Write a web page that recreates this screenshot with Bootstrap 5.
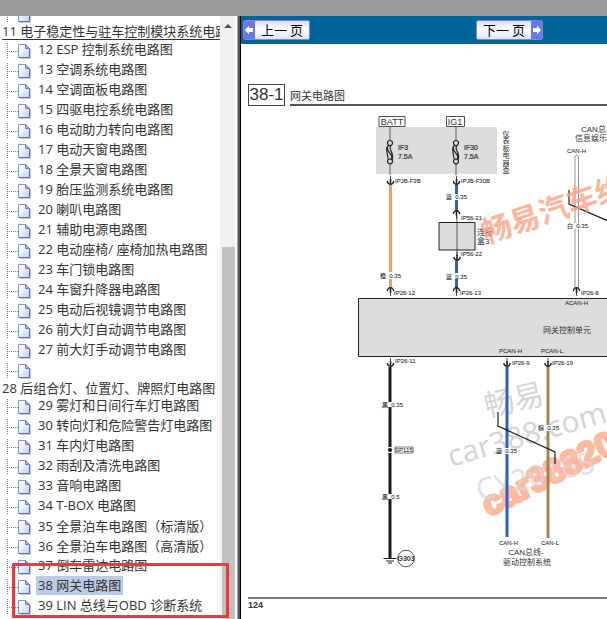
<!DOCTYPE html>
<html lang="zh-CN">
<head>
<meta charset="utf-8">
<meta name="viewport" content="width=device-width, initial-scale=1">
<title>网关电路图</title>
<link href="https://cdn.jsdelivr.net/npm/bootstrap@5.3.0/dist/css/bootstrap.min.css" rel="stylesheet">
<style>
body{font-family:"Open Sans","Noto Sans CJK SC",sans-serif;font-size:13px;color:#333;background:#fff}
.top-strip{height:16px;background:#999}
.tree-pane{width:220px}
.tree{margin-top:-12px}
.tree a{color:#333;text-decoration:none;white-space:nowrap}
.tree-head{height:16px;line-height:16px;padding-left:2px}
.tree a.tree-open{display:block;height:16px;line-height:15px;border-bottom:1px solid #333}
.tree-row{height:20px;line-height:20px;padding-left:7px}
.guide{width:11px;height:20px;flex:none;
 background:repeating-linear-gradient(#888 0 1px,#fff 1px 2px) 0 3px/1px 16px no-repeat,
 repeating-linear-gradient(90deg,#888 0 1px,#fff 1px 2px) 0 11px/11px 1px no-repeat}
.page-icon{width:14px;height:16px;flex:none;margin-top:3px}
.tree-text{margin-left:4px;padding:0 2px;height:19px;line-height:19px}
.tree-text.picked{background:#bccbe8}
.parens{font-family:"Noto Sans CJK TC",sans-serif}
.red-frame{position:absolute;left:12px;top:-13px;width:217px;height:55px;border:3px solid #fb3333;z-index:3;pointer-events:none}
.scroll-bar{width:17px;background:#f0f0f0;border-right:2px solid #fafafa}
.scroll-up{width:8px;height:4px;background:#505050;clip-path:polygon(50% 0,100% 100%,0 100%);margin:8px 4px 0}
.scroll-thumb{width:13px;margin:219px 0 0 2px;background:#c1c1c1}
.splitter{width:4px;background:#555;border-left:1px solid #aaa;border-right:1px solid #000}
.page-bar{height:28px;background:#069;padding:4px 2px}
.page-btn{height:20px;width:67px;padding:0;border:1px solid #8a80d8;border-radius:2px;background:linear-gradient(#d5dcff,#fff 45%,#dfe4ff);color:#000;font-family:"Noto Sans CJK SC",sans-serif;font-size:13px;line-height:17px}
.page-btn svg{width:11px;height:18px;flex:none}
.next-btn{margin-left:166px}
.sheet{padding:40px 0 0 7px}
.sheet-no{border:1px solid #444;height:22px;width:37px;font:17px/19px "Liberation Sans",sans-serif}
.sheet-name{font:11px/17px "Liberation Sans","Noto Sans CJK SC",sans-serif;border-bottom:2px solid #555;margin-left:5px;height:22px;padding-top:4px}
.sheet-foot{height:22px;margin-left:7px;border-top:2px solid #777;font:bold 9px/12px "Liberation Sans",sans-serif}
.wiring{min-height:0;font-family:"Liberation Sans","Noto Sans CJK SC",sans-serif;fill:#333}
.t6{font-size:6px}.t7{font-size:7px}.t8{font-size:8px}.t9{font-size:9px}
.ln{fill:none;stroke:#222}
.wm{font-family:"Noto Sans","Noto Sans CJK SC",sans-serif;font-size:30px;fill:#d6d6d6}
</style>
<script src="https://cdn.jsdelivr.net/npm/bootstrap@5.3.0/dist/js/bootstrap.bundle.min.js"></script>
</head>
<body class="vh-100 overflow-hidden d-flex flex-column">
<svg width="0" height="0" class="position-absolute" aria-hidden="true"><defs>
<linearGradient id="pg" x2="1" y2="1"><stop offset="0" stop-color="#fff"/><stop offset=".4" stop-color="#eef3ff"/><stop offset="1" stop-color="#b4d2fc"/></linearGradient>
<symbol id="page" viewBox="0 0 14 16"><path d="M2 15.500H12.500V6" fill="none" stroke="#ccc"/><path d="M.5 1.500H7.500L11.500 5.500V14.500H.5Z" fill="url(#pg)" stroke="#8794c8"/><path d="M7.500 1.500V5.500H11.500Z" fill="#a3b0e4" stroke="#6f7cb8"/><path d="M.5 14.500H11.500V6" fill="none" stroke="#5f6eaa"/></symbol>
</defs></svg>
<header class="top-strip flex-shrink-0"></header>
<div class="d-flex flex-grow-1 overflow-hidden">
<nav class="tree-pane flex-shrink-0" aria-label="目录">
<div class="tree" id="tree"></div>
</nav>
<div class="scroll-bar flex-shrink-0 d-flex flex-column" aria-hidden="true"><div class="scroll-up"></div><div class="scroll-thumb flex-grow-1"></div></div>
<div class="splitter flex-shrink-0"></div>
<main class="flex-grow-1 d-flex flex-column overflow-hidden">
<div class="page-bar d-flex flex-shrink-0">
<button type="button" class="page-btn d-flex flex-shrink-0"><svg viewBox="0 0 11 18" aria-hidden="true"><path d="M0 0H11V18H0Z" fill="#6878e4"/><path d="M1 9L5 4.500V7H9V11H5V13.500Z" fill="#fff"/></svg><span class="flex-grow-1">上一 页</span></button>
<button type="button" class="page-btn next-btn d-flex flex-shrink-0"><span class="flex-grow-1">下一 页</span><svg viewBox="0 0 11 18" aria-hidden="true"><path d="M0 0H11V18H0Z" fill="#6878e4"/><path d="M10 9L6 4.500V7H2V11H6V13.500Z" fill="#fff"/></svg></button>
</div>
<div class="sheet d-flex flex-shrink-0"><div class="sheet-no text-center">38-1</div><h1 class="sheet-name flex-grow-1 mb-0">网关电路图</h1></div>
<svg class="wiring w-100 flex-grow-1" viewBox="241 106 366 491" preserveAspectRatio="xMinYMin slice" role="img" aria-label="网关电路图">
<defs>
<g id="fork" class="ln"><path d="M0-7V-3" stroke-width=".8"/><path d="M0-4V1" stroke-width="1.600"/><path d="M-3.300-2Q-2.500 1.300 0 1.300T3.300-2" stroke-width="1.300"/></g>
<g id="fuse" class="ln" stroke-width="1.200"><path d="M0-25V-11.500M0 11.500V23" stroke-width=".7"/><circle cy="-9" r="2.500"/><circle cy="9.300" r="2.500"/><path d="M-1.500-7C-6-1 3 1 2 7M-2 6.500C-3-1-5-5-1-6.500M1-6.500C-3-3 5 0 2 8"/></g>
</defs>
<!-- background stamps -->
<text class="wm" transform="translate(487 417) rotate(-13)">畅易</text>
<text class="wm" transform="translate(451 467) rotate(-16)">car388.com</text>
<text transform="translate(489 517) rotate(-27)" font-size="34" font-weight="bold" fill="#ffb9a0" stroke="#ffb9a0" stroke-width="3" stroke-linejoin="round">car38820</text>
<text class="wm" transform="translate(479 501) rotate(-14)" opacity=".7">CY20165</text>
<!-- fuse box -->
<path d="M376 127H497V174H376Z" fill="#ddd"/>
<path class="ln" d="M379 116.500H405V126.500H379ZM446.500 116.500H464.500V126.500H446.500Z" stroke-width=".8"/>
<g class="t9" text-anchor="middle"><text x="392" y="125">BATT</text><text x="455" y="125">IG1</text></g>
<use href="#fuse" x="390" y="152"/><use href="#fuse" x="456" y="152"/>
<g class="t7" stroke="#333" stroke-width=".2"><text x="398" y="150">IF3</text><text x="398" y="159">7.5A</text><text x="464" y="150">IF30</text><text x="464" y="159">7.5A</text></g>
<g class="t7" text-anchor="middle"><text x="506" y="136">仪</text><text x="506" y="143">表</text><text x="506" y="151">板</text><text x="506" y="158">电</text><text x="506" y="166">器</text><text x="506" y="173">盒</text></g>
<!-- joint box and control unit -->
<path d="M439 222.500H475V250H439Z" fill="#ddd" stroke="#222"/>
<path class="ln" d="M457 216V256" stroke-width=".7"/>
<path d="M358.500 298.500H620V356.500H358.500Z" fill="#ddd" stroke="#222"/>
<!-- wires -->
<g fill="none" stroke-width="3">
<path d="M390.500 185V288" stroke="#f9a05f"/>
<path d="M456.500 185V211M456.500 261V288M507 367V537" stroke="#2d62b8"/>
<path d="M548 367V538" stroke="#a5854f"/>
<path d="M390 367V558" stroke="#1c1c1c"/>
<path d="M575 288V157Q576.500 153 578.500 157V288" stroke="#777" stroke-width=".8"/>
</g>
<use href="#fork" x="390.500" y="183"/><use href="#fork" x="456.500" y="183"/><use href="#fork" x="457" y="259"/>
<use href="#fork" x="390.500" y="365"/><use href="#fork" x="507" y="365"/><use href="#fork" x="548" y="365"/>
<g transform="scale(1 -1)"><use href="#fork" x="456.500" y="-212"/><use href="#fork" x="390.500" y="-289"/><use href="#fork" x="456.500" y="-289"/><use href="#fork" x="576.500" y="-289"/></g>
<path class="ln" d="M569 190V204L615 224M498 412V426L555 452V464" stroke-width="1.200"/>
<!-- gaps behind the wire ratings -->
<path d="M387 272H394V279H387ZM453 194H460V200H453ZM453 273H460V279H453ZM573 223H582V229H573ZM386 402H394V407H386ZM386 494H394V499H386ZM503 448H511V454H503ZM544 425H552V431H544Z" fill="#fff"/>
<g class="t6" stroke="#333" stroke-width=".1">
<text x="395" y="183">IPJB-F3B</text><text x="461" y="183">IPJB-F30B</text><text x="461" y="220">IP56-21</text><text x="461" y="256">IP56-22</text>
<text x="394" y="295">IP26-12</text><text x="460" y="295">IP26-13</text><text x="581" y="295">IP26-8</text><text x="565" y="305">ACAN-H</text>
<text x="567" y="153">CAN-H</text><text x="499" y="353">PCAN-H</text><text x="541" y="353">PCAN-L</text>
<text x="395" y="363">IP26-11</text><text x="512" y="365">IP26-9</text><text x="552" y="365">IP26-19</text>
<text x="380" y="278">橙&#160; 0.35</text><text x="446" y="199">蓝&#160; 0.35</text><text x="446" y="279">蓝&#160; 0.35</text><text x="567" y="228">白&#160; 0.35</text>
<text x="382" y="407">黑&#160; 0.35</text><text x="382" y="499">黑&#160; 0.5</text><text x="496" y="453">蓝&#160; 0.35</text><text x="538" y="430">棕&#160; 0.35</text>
<text x="499" y="545">CAN-H</text><text x="541" y="545">CAN-L</text><text x="395" y="452">SP115</text>
</g>
<path class="ln" d="M395 447H413V453H395Z" stroke-width=".6"/>
<circle cx="390" cy="450" r="3" fill="#fff"/><circle cx="390" cy="450" r="2" fill="#111"/>
<path class="ln" d="M383.500 558.500H396.500M386 561H394M388 563H392" stroke-width="1.200"/>
<circle class="ln" cx="406" cy="558.500" r="8.300" stroke-width=".8"/>
<text class="t7" x="406" y="561" text-anchor="middle" font-weight="bold">G303</text>
<g class="t8"><text x="581" y="132">CAN总线-</text><text x="575" y="141">信息娱乐系统</text><text x="477" y="235">连接</text><text x="477" y="244">盒3</text>
<text x="567" y="333" text-anchor="middle">网关控制单元</text><text x="526" y="555" text-anchor="middle">CAN总线-</text><text x="527" y="565" text-anchor="middle">驱动控制系统</text></g>
<text transform="translate(486 244) rotate(-19)" font-size="30" font-weight="bold" fill="#ff9c80" opacity=".75">畅易汽车维</text>
</svg>
<footer class="sheet-foot flex-shrink-0">124</footer>
</main>
</div>
<script>
const rows = ["", "#11 电子稳定性与驻车控制模块系统电路", "12 ESP 控制系统电路图", "13 空调系统电路图", "14 空调面板电路图", "15 四驱电控系统电路图", "16 电动助力转向电路图", "17 电动天窗电路图", "18 全景天窗电路图", "19 胎压监测系统电路图", "20 喇叭电路图", "21 辅助电源电路图", "22 电动座椅/ 座椅加热电路图", "23 车门锁电路图", "24 车窗升降器电路图", "25 电动后视镜调节电路图", "26 前大灯自动调节电路图", "27 前大灯手动调节电路图", "", "#28 后组合灯、位置灯、牌照灯电路图", "29 雾灯和日间行车灯电路图", "30 转向灯和危险警告灯电路图", "31 车内灯电路图", "32 雨刮及清洗电路图", "33 音响电路图", "34 T-BOX 电路图", "35 全景泊车电路图（标清版）", "36 全景泊车电路图（高清版）", "37 倒车雷达电路图", "38 网关电路图", "39 LIN 总线与OBD 诊断系统", ""];
const label = t => t.replace(/[（）]/g, '<span class="parens" lang="zh-TW">$&</span>');
document.getElementById("tree").innerHTML = rows.map(r => {
  if (r[0] === "#") return `<div class="tree-head overflow-hidden"><a href="#" class="${r.startsWith("#11") ? "tree-open" : ""}">${r.slice(1)}</a></div>`;
  const picked = r.startsWith("38");
  return `<div class="tree-row d-flex position-relative"><span class="guide"></span><svg class="page-icon" aria-hidden="true"><use href="#page"/></svg>${r ? `<a href="#" class="tree-text ${picked ? "picked" : ""}">${label(r)}</a>` : ""}${picked ? '<span class="red-frame"></span>' : ""}</div>`;
}).join("");
</script>
</body>
</html>
